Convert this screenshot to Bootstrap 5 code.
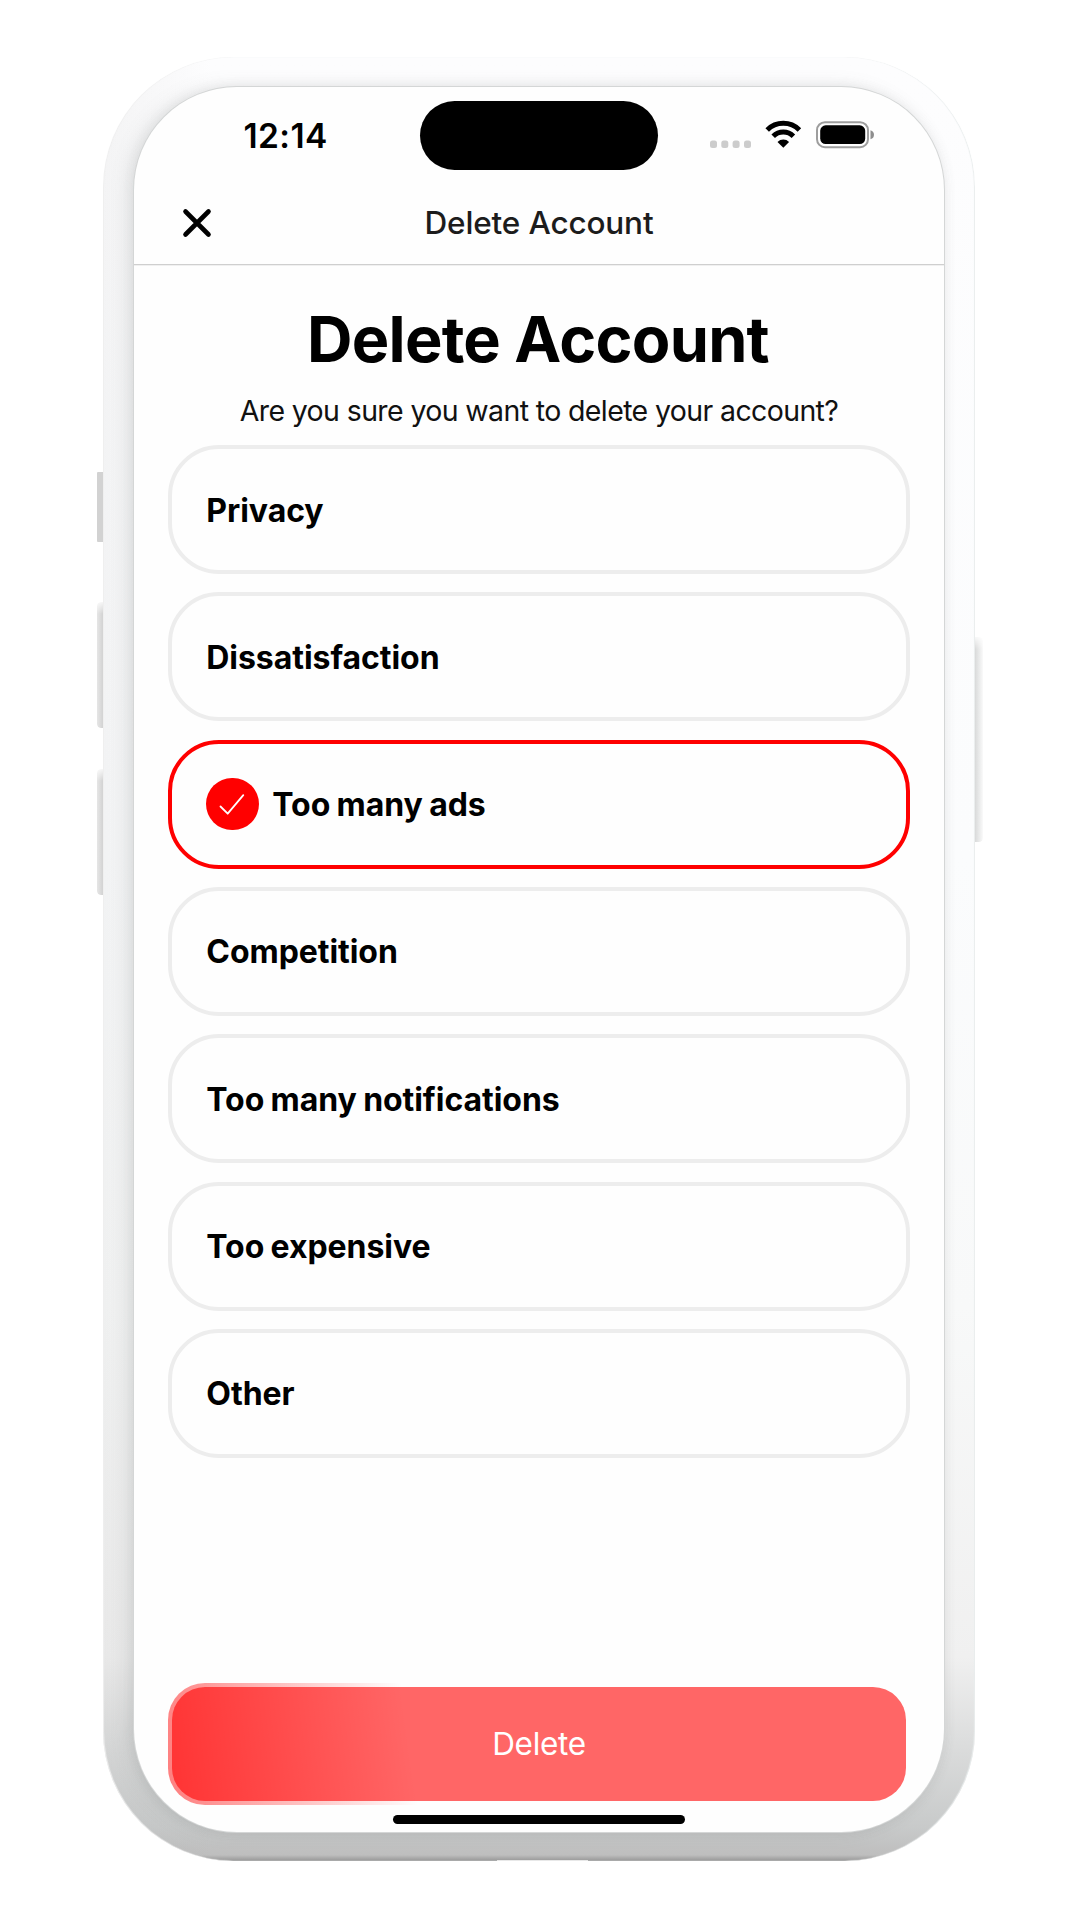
<!DOCTYPE html>
<html lang="en">
<head>
<meta charset="utf-8">
<meta name="viewport" content="width=device-width, initial-scale=1">
<title>Delete Account</title>
<link href="https://cdn.jsdelivr.net/npm/bootstrap@5.3.0/dist/css/bootstrap.min.css" rel="stylesheet">
<style>
body{width:1080px;height:1920px;background:#fff;font-family:Inter,"Liberation Sans",sans-serif;color:#000;overflow:hidden}
.stage{padding:57px 105px 0 103px}
.phone{height:1804px;padding:30px 31px 29px}
.shade{inset:0;border-radius:130px;background:linear-gradient(90deg,rgba(120,120,120,.07),rgba(120,120,120,0) 110px),linear-gradient(180deg,#fdfdfe 0,#fbfcfd 800px,#f8f9f9 1250px,#f0f0f0 1600px,#c8caca 1770px,#bebebe 1798px,#969696 1804px);box-shadow:inset 1px 0 1px #efefef,inset -1px 0 1px #e9eded}
.glow{inset:30px 31px 29px;border-radius:103px;box-shadow:-6px 0 18px rgba(110,118,116,.17),0 0 12px rgba(110,110,110,.1)}
.antenna{width:91px;height:1.500px;left:394px;bottom:0;background:#e8e8e8}
.side-key{width:7px;border-radius:4px 0 0 4px;background:linear-gradient(90deg,#e6e6e6,#cfcfcf);left:-6px}
.side-key.mute{top:415px;height:70px;border-radius:1px;background:#d2d2d2}
.side-key.vol-up{top:545px;height:126px}
.side-key.vol-down{top:712px;height:126px}
.side-key.power{left:872px;top:580px;height:205px;width:8px;border-radius:0 4px 4px 0;background:linear-gradient(90deg,#d9dada,#e7e8e8 45%,#fafafa)}
.side-key.vol-up,.side-key.vol-down,.side-key.power{-webkit-mask-image:linear-gradient(180deg,rgba(0,0,0,.2),#000 12px);mask-image:linear-gradient(180deg,rgba(0,0,0,.2),#000 12px)}
.screen{height:1745px;background:#fefefe;border-radius:103px;box-shadow:0 0 0 1px #d4d6d6}
.status{height:98px}
.clock{left:109.500px;top:29px;font-size:33.500px;line-height:40px;font-weight:600;letter-spacing:.4px}
.island{width:238px;height:69px;border-radius:35px;margin-top:14px}
.indicators{right:69.500px;top:33px}
.titlebar{height:80px;border-bottom:1px solid #cfcfcf;box-shadow:0 1px #f0f0f0}
.titlebar-text{font-size:31.500px;line-height:40px;font-weight:500;letter-spacing:-.15px;color:#1c1c1c;margin-top:-4px}
.close-icon{left:47.500px;top:23px}
.content{padding:0 34px}
.headline{font-size:63px;line-height:76px;font-weight:700;margin-top:36px;letter-spacing:-.75px;padding-right:2px}
.question{font-size:28.500px;line-height:36px;margin-top:16px;color:#111;letter-spacing:-.62px}
.reasons{margin-top:16px;gap:18.330px}
.reason{height:129px;border:4px solid #ededed;border-radius:51px;padding-left:34.300px;font-size:32px;font-weight:700;letter-spacing:-.05px;word-spacing:-1.200px;background:#fefefe}
.reason>span{padding-top:2px}
.reason.chosen{border-color:#f00}
.tick{width:52.500px;height:52.500px;background:#f00;margin-right:13.500px}
.delete-btn{height:121.500px;margin:auto 34px 0;border:4px solid transparent;border-radius:37px;padding:0;font-size:31.500px;font-weight:400;letter-spacing:-.3px;color:#fff;
 background:linear-gradient(82deg,rgba(255,0,0,.5),rgba(255,0,0,0) 248px) border-box,linear-gradient(#f66,#f66) padding-box}
.home-bar{width:292px;height:9.500px;margin:10px auto 8px}
</style>
</head>
<body>
<main class="stage">
<div class="phone position-relative">
 <span class="side-key mute position-absolute"></span><span class="side-key vol-up position-absolute"></span><span class="side-key vol-down position-absolute"></span><span class="side-key power position-absolute"></span>
 <div class="shade position-absolute overflow-hidden"><div class="glow position-absolute"></div><div class="antenna position-absolute"></div></div>
 <div class="screen position-relative d-flex flex-column">
  <div class="status position-relative d-flex justify-content-center">
   <div class="clock position-absolute">12:14</div>
   <div class="island bg-black"></div>
   <svg class="indicators position-absolute" width="166" height="30" viewBox="0 0 166 30">
    <g fill="#ccc"><rect x="1" y="20.500" width="7" height="7.500" rx="2.500"/><rect x="12.300" y="20.500" width="7" height="7.500" rx="2.500"/><rect x="23.600" y="20.500" width="7" height="7.500" rx="2.500"/><rect x="35" y="20.500" width="7" height="7.500" rx="2.500"/></g>
    <g fill="none" stroke="#000" stroke-width="5"><path d="M58.200 10A22.800 22.800 0 0 1 90.400 10"/><path d="M64.200 16.200A14.300 14.300 0 0 1 84.400 16.200"/></g>
    <path d="M68.500 21.900a8.500 8.500 0 0 1 11.600 0l-5.800 5.800z"/>
    <rect x="108" y="2.200" width="51" height="25" rx="8" fill="none" stroke="#9d9d9d" stroke-width="2"/><rect x="111.200" y="5.300" width="45" height="18.800" rx="5.500"/><path d="M161.500 10.200q3.500 1 3.500 4.500t-3.500 4.500z" fill="#8e8e8e"/>
   </svg>
  </div>
  <header class="titlebar position-relative d-flex justify-content-center align-items-center">
   <svg class="close-icon position-absolute" width="30" height="30" viewBox="0 0 30 30"><path d="M3.500 3.500l23 23m0-23l-23 23" stroke="#000" stroke-width="4.600" stroke-linecap="round"/></svg>
   <span class="titlebar-text">Delete Account</span>
  </header>
  <section class="content">
   <h1 class="headline mb-0 text-center text-nowrap">Delete Account</h1>
   <p class="question mb-0 text-center text-nowrap">Are you sure you want to delete your account?</p>
   <div class="reasons d-flex flex-column">
    <div class="reason d-flex align-items-center"><span>Privacy</span></div>
    <div class="reason d-flex align-items-center"><span>Dissatisfaction</span></div>
    <div class="reason chosen d-flex align-items-center"><div class="tick rounded-circle"><svg class="d-block" width="53" height="53" viewBox="0 0 53 53"><path d="M14.500 28.500l7.200 7.200 15.600-18.500" fill="none" stroke="#fff" stroke-width="1.800" stroke-linecap="round" stroke-linejoin="round"/></svg></div><span>Too many ads</span></div>
    <div class="reason d-flex align-items-center"><span>Competition</span></div>
    <div class="reason d-flex align-items-center"><span>Too many notifications</span></div>
    <div class="reason d-flex align-items-center"><span>Too expensive</span></div>
    <div class="reason d-flex align-items-center"><span>Other</span></div>
   </div>
  </section>
  <button type="button" class="btn delete-btn">Delete</button>
  <div class="home-bar bg-black rounded-pill"></div>
 </div>
</div>
</main>
<script src="https://cdn.jsdelivr.net/npm/bootstrap@5.3.0/dist/js/bootstrap.bundle.min.js"></script>
</body>
</html>
